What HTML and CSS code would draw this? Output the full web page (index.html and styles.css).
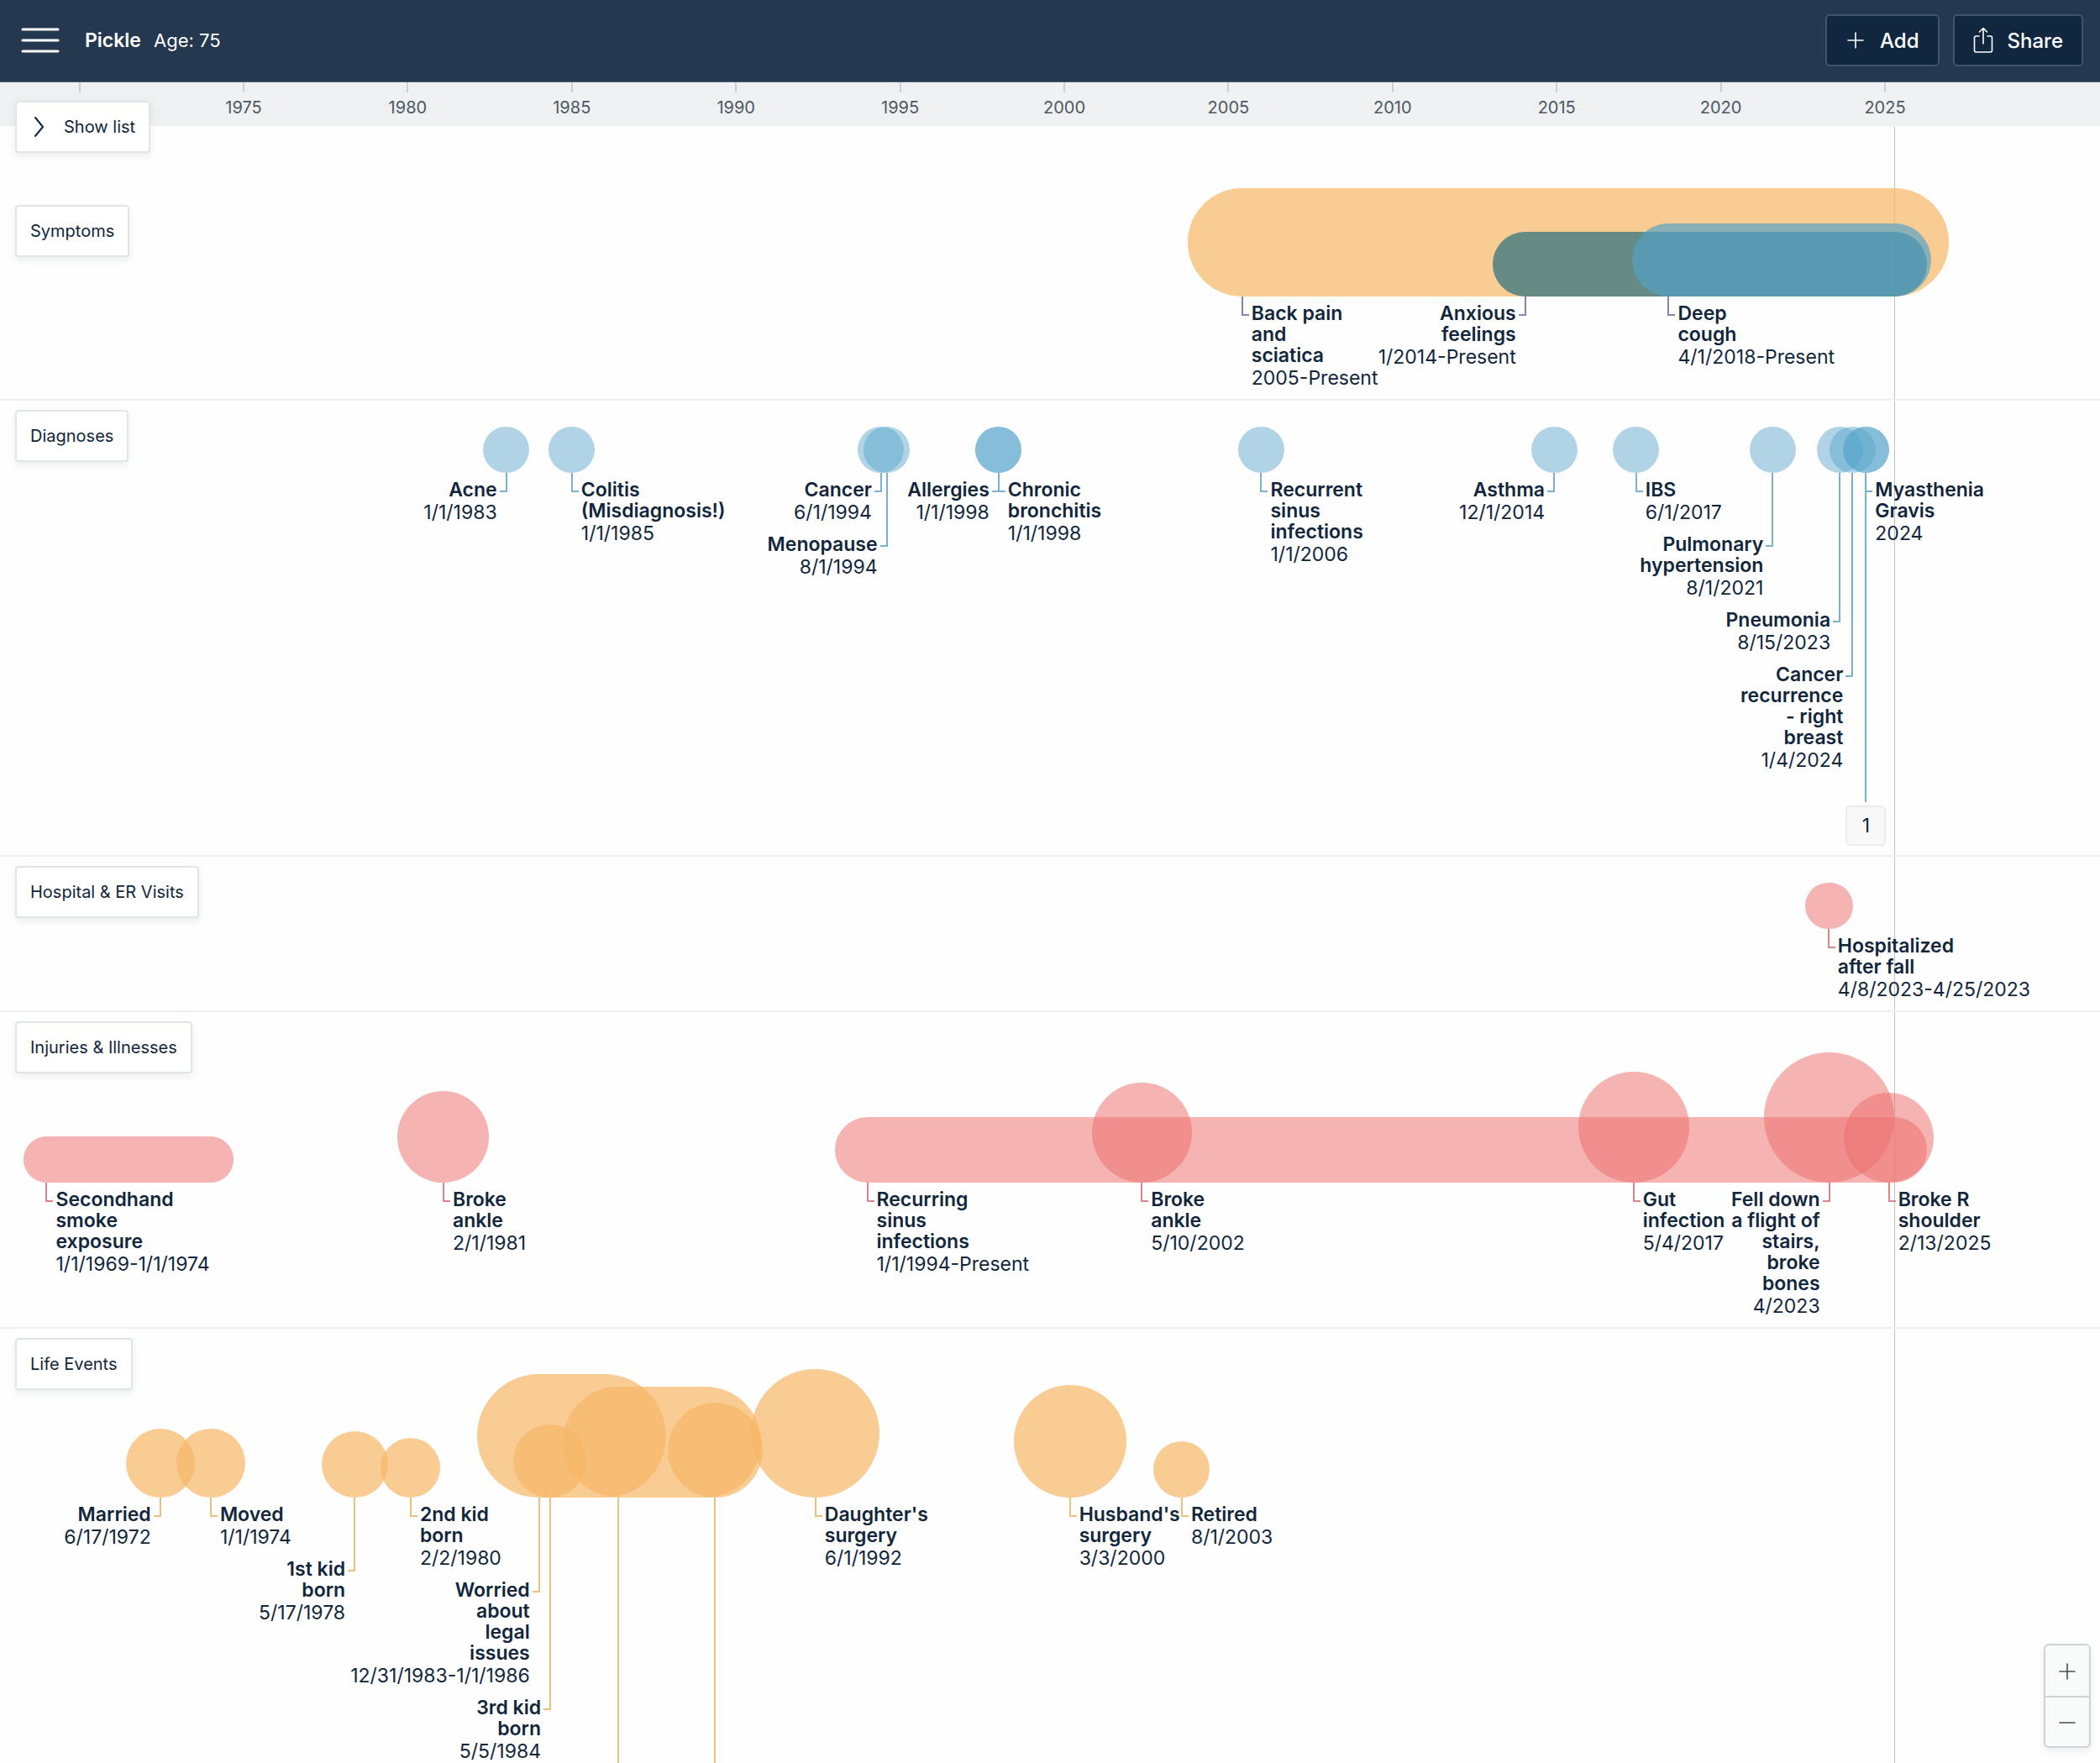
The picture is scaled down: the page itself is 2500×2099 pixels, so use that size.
FILE: index.html
```html
<!DOCTYPE html>
<html lang="en">
<head>
  <meta charset="UTF-8">
  <meta name="viewport" content="width=device-width, initial-scale=1">
  <title>Pickle - Health Timeline</title>
  <link rel="stylesheet" href="styles.css">
</head>
<body>
  <header class="topbar">
    <button class="menu-btn" type="button" aria-label="Menu">
      <svg width="46" height="32" viewBox="0 0 46 32"><path d="M2 3h42M2 16h42M2 29h42"/></svg>
    </button>
    <strong class="name">Pickle</strong>
    <span class="age">Age: 75</span>
    <div class="actions">
      <button class="action" type="button">
        <svg width="20" height="20" viewBox="0 0 20 20"><path d="M10 1v18M1 10h18"/></svg>
        Add
      </button>
      <button class="action action-share" type="button">
        <svg width="24" height="32" viewBox="0 0 24 32"><path d="M7 11H3.500a2 2 0 0 0-2 2v15a2 2 0 0 0 2 2h17a2 2 0 0 0 2-2V13a2 2 0 0 0-2-2H17M12 20V2M7.500 6L12 1.500 16.500 6"/></svg>
        Share
      </button>
    </div>
  </header>

  <div class="axis"></div>

  <main class="chart">
    <button class="chip show-list" type="button">
      <svg width="14" height="26" viewBox="0 0 14 26"><path d="M2 2l9 11-9 11"/></svg>
      Show list
    </button>
    <div class="now-line"></div>
  </main>

  <div class="zoom">
    <button type="button" aria-label="Zoom in"><svg width="20" height="20" viewBox="0 0 20 20"><path d="M10 1v18M1 10h18"/></svg></button>
    <button type="button" aria-label="Zoom out"><svg width="20" height="20" viewBox="0 0 20 20"><path d="M1 10h18"/></svg></button>
  </div>

  <script src="script.js"></script>
</body>
</html>
```
FILE: styles.css
```css
* {
  box-sizing: border-box;
}

body {
  margin: 0;
  height: 100vh;
  display: flex;
  flex-direction: column;
  overflow: hidden;
  font-family: Inter, "Liberation Sans", sans-serif;
  color: #12263b;
  background: #fefefe;
}

button {
  font: inherit;
  color: inherit;
  cursor: pointer;
}

svg {
  flex: none;
  fill: none;
  stroke: currentColor;
  stroke-width: 1.6;
  stroke-linecap: round;
  stroke-linejoin: round;
}

.topbar {
  flex: none;
  display: flex;
  align-items: center;
  height: 98px;
  padding: 0 20px 1px 25px;
  background: #24384f;
  border-bottom: 1px solid #4a5f72;
  color: white;
  font-size: 22px;
}

.menu-btn {
  display: flex;
  padding: 0;
  border: none;
  background: none;
}

.menu-btn svg {
  stroke-width: 3;
}

.name {
  margin-left: 30px;
  font-size: 23px;
  font-weight: 600;
}

.age {
  margin-left: 15px;
}

.actions {
  display: flex;
  gap: 16px;
  margin-left: auto;
}

.action {
  display: flex;
  align-items: center;
  gap: 19px;
  height: 62px;
  padding: 0 22px 0 24px;
  border: 2px solid #3d556d;
  border-radius: 5px;
  background: #11273f;
  font-size: 24px;
  font-weight: 500;
}

.action-share {
  gap: 17px;
  padding: 0 22px;
}

.axis {
  flex: none;
  display: grid;
  grid-template-columns: minmax(0, 1fr);
  height: 52px;
  background: #eff0f2;
  color: #4d5862;
  font-size: 20px;
}

.tick {
  grid-area: 1 / 1;
  display: flex;
  flex-direction: column;
  align-items: center;
  gap: 6px;
  width: 60px;
  line-height: 24px;
}

.tick::before {
  content: "";
  width: 2px;
  height: 12px;
  background: #ccd0d4;
}

.chart {
  flex: 1;
  min-height: 0;
  position: relative;
  padding-top: 74px;
}

.now-line {
  position: absolute;
  top: 0;
  bottom: 0;
  width: 1px;
  background: #bfc3c7;
}

.chip {
  position: absolute;
  top: 11px;
  left: 18px;
  z-index: 1;
  display: flex;
  align-items: center;
  height: 62px;
  padding: 0 16px;
  border: 2px solid #e2e5e8;
  border-radius: 4px;
  background: white;
  box-shadow: 0 4px 8px rgba(18, 38, 59, 0.08);
  font-size: 20px;
  white-space: nowrap;
}

.show-list {
  top: -30px;
  gap: 22px;
  padding-left: 20px;
}

.show-list svg {
  stroke-width: 2;
}

.lane {
  position: relative;
  padding: 31px 0 11px;
  border-bottom: 2px solid #eeeff1;
}

.lane-symptoms {
  padding-top: 0;
}

.lane-symptoms .chip {
  top: 20px;
}

.lane-tall {
  padding-top: 48px;
}

/* every item shares one grid cell and is pushed along it by its date */
.shapes,
.labels {
  display: grid;
  grid-template-columns: minmax(0, 1fr);
}

.shape {
  grid-area: 1 / 1;
  align-self: end;
  border-radius: 100px;
}

.shape.orange { background: rgba(246, 183, 102, 0.7); }
.shape.red { background: rgba(236, 111, 110, 0.53); }
.shape.blue { background: rgba(86, 163, 202, 0.46); }
.shape.teal { background: rgba(40, 109, 125, 0.7); }
.shape.sky { background: rgba(84, 162, 197, 0.68); }

.labels {
  margin-top: 8px;
}

.label {
  grid-area: 1 / 1;
  position: relative;
  justify-self: start;
  align-self: start;
  font-size: 23px;
  line-height: 27px;
  white-space: nowrap;
}

.label h3 {
  margin: 0 0 1px;
  font-size: 23px;
  font-weight: 600;
  line-height: 25px;
}

.label.orange { --line: #e9c27e; }
.label.red { --line: #dc8488; }
.label.blue { --line: #7ab1cb; }
.label.violet { --line: #8585b3; }

.label.start {
  padding-left: 11px;
}

.label.end {
  justify-self: end;
  padding-right: 11px;
  text-align: right;
}

/* connector from the shape down to the label */
.label::before {
  content: "";
  position: absolute;
  top: calc(-8px - var(--drop));
  height: calc(21px + var(--drop));
  width: 7px;
  border: solid var(--line);
  border-width: 0 0 2px 2px;
}

.label.start::before {
  left: -1px;
}

.label.end::before {
  right: -1px;
  border-width: 0 2px 2px 0;
}

.label.more::before {
  left: 23px;
  height: calc(4px + var(--drop));
  border-bottom: none;
}

.more button {
  display: block;
  width: 48px;
  height: 48px;
  padding: 0;
  border: 2px solid #ebecee;
  border-radius: 5px;
  background: #f8f8f8;
}

.zoom {
  position: fixed;
  right: 11px;
  bottom: 18px;
  z-index: 2;
  display: flex;
  flex-direction: column;
  border: 2px solid #ccd3d7;
  border-radius: 6px;
  background: #f8f9f9;
  box-shadow: 0 4px 8px rgba(18, 38, 59, 0.08);
  color: #4b4f55;
}

.zoom button {
  display: flex;
  align-items: center;
  justify-content: center;
  width: 52px;
  height: 60px;
  padding: 2px 0 0;
  border: none;
  background: none;
}

.zoom button + button {
  border-top: 2px solid #ccd3d7;
}
```
FILE: script.js
```js
const FIRST = 1967.58;
const SPAN = 63.97;
const NOW = 2025.29;

// position of a date along the timeline, in percent
const pos = year => (year - FIRST) / SPAN * 100;

// at / to: date as a decimal year, size: impact, drop: how far the label hangs
const lanes = [
  {
    name: "Symptoms", color: "orange", line: "violet", cls: "lane-symptoms",
    events: [
      { at: 2005.42, to: NOW, size: 129, title: "Back pain|and|sciatica", date: "2005-Present" },
      { at: 2014.04, to: NOW, size: 77, color: "teal", title: "Anxious|feelings", date: "1/2014-Present", end: true },
      { at: 2018.41, to: NOW, size: 87, color: "sky", title: "Deep|cough", date: "4/1/2018-Present" }
    ]
  },
  {
    name: "Diagnoses", color: "blue", cls: "",
    events: [
      { at: 1983, size: 55, title: "Acne", date: "1/1/1983", end: true },
      { at: 1985, size: 55, title: "Colitis|(Misdiagnosis!)", date: "1/1/1985" },
      { at: 1994.42, size: 55, title: "Cancer", date: "6/1/1994", end: true },
      { at: 1994.59, size: 55, title: "Menopause", date: "8/1/1994", end: true, drop: 65 },
      { at: 1998, size: 55, title: "Allergies", date: "1/1/1998", end: true },
      { at: 1998, size: 55, title: "Chronic|bronchitis", date: "1/1/1998" },
      { at: 2006, size: 55, title: "Recurrent|sinus|infections", date: "1/1/2006" },
      { at: 2014.92, size: 55, title: "Asthma", date: "12/1/2014", end: true },
      { at: 2017.42, size: 55, title: "IBS", date: "6/1/2017" },
      { at: 2021.58, size: 55, title: "Pulmonary|hypertension", date: "8/1/2021", end: true, drop: 65 },
      { at: 2023.62, size: 55, title: "Pneumonia", date: "8/15/2023", end: true, drop: 155 },
      { at: 2024.01, size: 55, title: "Cancer|recurrence|- right|breast", date: "1/4/2024", end: true, drop: 220 },
      { at: 2024.42, size: 55, title: "Myasthenia|Gravis", date: "2024" },
      { at: 2024.42, size: 55, more: 1, drop: 388 }
    ]
  },
  {
    name: "Hospital & ER Visits", color: "red", cls: "",
    events: [
      { at: 2023.28, to: 2023.32, size: 55, title: "Hospitalized|after fall", date: "4/8/2023-4/25/2023" }
    ]
  },
  {
    name: "Injuries & Illnesses", color: "red", cls: "lane-tall",
    events: [
      { at: 1969, to: 1974, size: 55, title: "Secondhand|smoke|exposure", date: "1/1/1969-1/1/1974" },
      { at: 1981.09, size: 109, title: "Broke|ankle", date: "2/1/1981" },
      { at: 1994, to: NOW, size: 78, title: "Recurring|sinus|infections", date: "1/1/1994-Present" },
      { at: 2002.36, size: 119, title: "Broke|ankle", date: "5/10/2002" },
      { at: 2017.34, size: 132, title: "Gut|infection", date: "5/4/2017" },
      { at: 2023.3, size: 155, title: "Fell down|a flight of|stairs,|broke|bones", date: "4/2023", end: true },
      { at: 2025.12, size: 107, title: "Broke R|shoulder", date: "2/13/2025" }
    ]
  },
  {
    name: "Life Events", color: "orange", cls: "lane-tall",
    events: [
      { at: 1972.46, size: 82, title: "Married", date: "6/17/1972", end: true },
      { at: 1974, size: 82, title: "Moved", date: "1/1/1974" },
      { at: 1978.38, size: 79, title: "1st kid|born", date: "5/17/1978", end: true, drop: 65 },
      { at: 1980.09, size: 71, title: "2nd kid|born", date: "2/2/1980" },
      { at: 1984, to: 1986, size: 147, title: "Worried|about|legal|issues", date: "12/31/1983-1/1/1986", end: true, drop: 90 },
      { at: 1984.34, size: 87, title: "3rd kid|born", date: "5/5/1984", end: true, drop: 230 },
      { at: 1986.42, to: 1989.08, size: 132, drop: 400 },
      { at: 1989.36, size: 113, drop: 400 },
      { at: 1992.42, size: 153, title: "Daughter's|surgery", date: "6/1/1992" },
      { at: 2000.17, size: 134, title: "Husband's|surgery", date: "3/3/2000" },
      { at: 2003.58, size: 67, title: "Retired", date: "8/1/2003" }
    ]
  }
];

function shape(e, color) {
  const length = e.to ? pos(e.to) - pos(e.at) : 0;
  return `<div class="shape ${e.color || color}" style="height:${e.size}px;width:calc(${length}% + ${e.size}px);margin-left:calc(${pos(e.at)}% - ${e.size / 2}px)"></div>`;
}

function label(e, line) {
  const drop = e.drop || 0;
  if (!e.title) {
    const button = e.more ? `<button type="button">${e.more}</button>` : "";
    return `<div class="label more ${line}" style="--drop:${drop}px;margin-top:${drop}px;margin-left:calc(${pos(e.at)}% - 24px)">${button}</div>`;
  }
  const margin = e.end ? `margin-right:${100 - pos(e.at)}%` : `margin-left:${pos(e.at)}%`;
  return `<article class="label ${e.end ? "end" : "start"} ${line}" style="--drop:${drop}px;margin-top:${drop}px;${margin}">
    <h3>${e.title.split("|").join("<br>")}</h3>
    ${e.date}
  </article>`;
}

const axis = document.querySelector(".axis");
for (let year = 1970; year <= 2025; year += 5) {
  axis.innerHTML += `<span class="tick" style="margin-left:calc(${pos(year)}% - 30px)">${year}</span>`;
}

const chart = document.querySelector(".chart");
lanes.forEach(lane => {
  const section = document.createElement("section");
  section.className = "lane " + lane.cls;
  section.innerHTML = `
    <button class="chip" type="button">${lane.name.replace("&", "&amp;")}</button>
    <div class="shapes">${lane.events.map(e => shape(e, lane.color)).join("")}</div>
    <div class="labels">${lane.events.map(e => label(e, lane.line || lane.color)).join("")}</div>`;
  chart.appendChild(section);
});

document.querySelector(".now-line").style.left = pos(NOW) + "%";
```
